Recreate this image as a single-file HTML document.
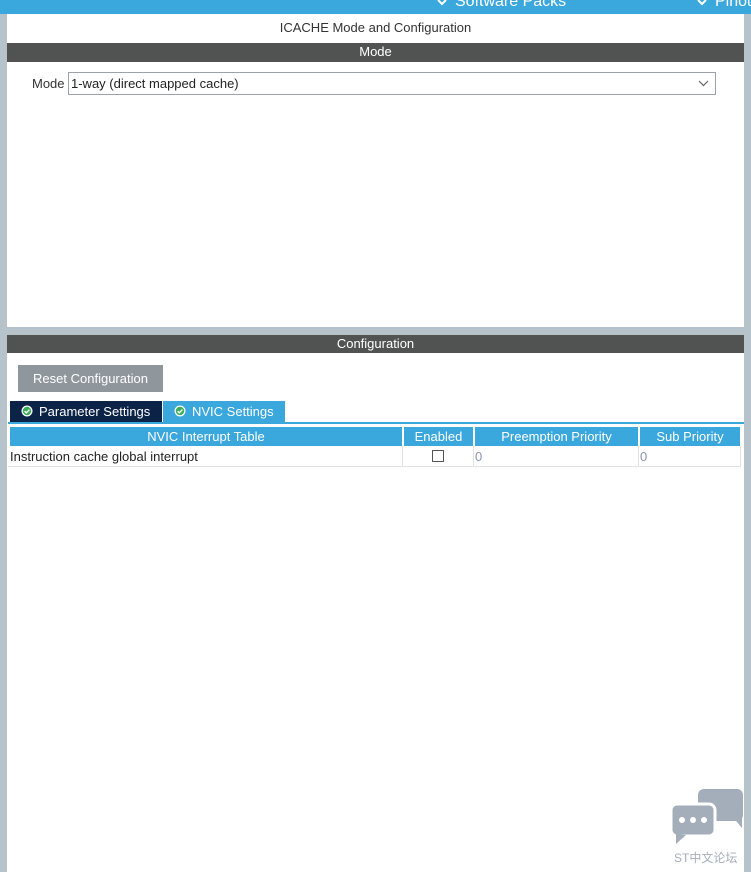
<!DOCTYPE html>
<html><head><meta charset="utf-8"><style>
*{margin:0;padding:0;box-sizing:border-box}
body{width:751px;height:872px;background:#b6c3cb;position:relative;overflow:hidden;font-family:"Liberation Sans",Arial,sans-serif;font-size:13px;color:#222}
.a{position:absolute;white-space:nowrap}
.top{left:0;top:0;width:751px;height:14px;background:#3aa8dc;color:#fff;font-size:16px;overflow:hidden}
.hdr{background:#515352;color:#fff;text-align:center;font-size:13px;line-height:18px}
.th{background:#3aa8dc;color:#fff;text-align:center;line-height:19px;font-size:13px;top:427px;height:19px}
</style></head><body>
<div class="a top"><svg class="a" style="left:437px;top:0" width="10" height="6"><path d="M1 0L5 4L9 0" stroke="#fff" stroke-width="2" fill="none"/></svg><span class="a" style="left:455px;top:-7px">Software Packs</span><svg class="a" style="left:697px;top:0" width="10" height="6"><path d="M1 0L5 4L9 0" stroke="#fff" stroke-width="2" fill="none"/></svg><span class="a" style="left:715px;top:-7px">Pinout</span></div>
<div class="a" style="left:7px;top:14px;width:737px;height:313px;background:#fff"></div>
<div class="a" style="left:7px;top:20px;width:737px;text-align:center;color:#333">ICACHE Mode and Configuration</div>
<div class="a hdr" style="left:7px;top:43px;width:737px;height:19px">Mode</div>
<div class="a" style="left:32px;top:76px;color:#333">Mode</div>
<div class="a" style="left:68px;top:72px;width:648px;height:23px;border:1px solid #9aa3a8;padding:3px 2px;color:#222">1-way (direct mapped cache)<svg class="a" style="right:6px;top:7px" width="11" height="7"><path d="M1 1L5.5 5.5L10 1" fill="none" stroke="#666" stroke-width="1.2"/></svg></div>
<div class="a" style="left:7px;top:335px;width:737px;height:537px;background:#fff"></div>
<div class="a hdr" style="left:7px;top:335px;width:737px;height:18px">Configuration</div>
<div class="a" style="left:18px;top:365px;width:145px;height:27px;background:#8f979d;color:#fff;line-height:27px;text-align:center">Reset Configuration</div>
<div class="a" style="left:10px;top:401px;width:152px;height:21px;background:#0b2347;color:#fff;line-height:21px;padding-left:29px">Parameter Settings</div>
<div class="a" style="left:163px;top:401px;width:122px;height:21px;background:#3aa8dc;color:#fff;line-height:21px;padding-left:29px">NVIC Settings</div>
<svg class="a" style="left:21px;top:405px" width="12" height="12"><circle cx="6" cy="6" r="5.5" fill="#fff"/><circle cx="6" cy="6" r="4.2" fill="#3cae5a"/><path d="M3.6 6.2L5.3 7.8L8.4 4.6" stroke="#fff" stroke-width="1.4" fill="none"/></svg>
<svg class="a" style="left:174px;top:405px" width="12" height="12"><circle cx="6" cy="6" r="5.5" fill="#fff"/><circle cx="6" cy="6" r="4.2" fill="#3cae5a"/><path d="M3.6 6.2L5.3 7.8L8.4 4.6" stroke="#fff" stroke-width="1.4" fill="none"/></svg>
<div class="a" style="left:8px;top:422px;width:736px;height:2px;background:#3aa8dc"></div>
<div class="a th" style="left:10px;width:392px">NVIC Interrupt Table</div>
<div class="a th" style="left:404px;width:69px">Enabled</div>
<div class="a th" style="left:475px;width:163px">Preemption Priority</div>
<div class="a th" style="left:640px;width:100px">Sub Priority</div>
<div class="a" style="left:8px;top:446px;width:733px;height:21px;border-bottom:1px solid #e2e2e2;border-right:1px solid #e2e2e2"></div>
<div class="a" style="left:402px;top:446px;width:1px;height:20px;background:#e2e2e2"></div>
<div class="a" style="left:473px;top:446px;width:1px;height:20px;background:#e2e2e2"></div>
<div class="a" style="left:638px;top:446px;width:1px;height:20px;background:#e2e2e2"></div>
<div class="a" style="left:10px;top:449px">Instruction cache global interrupt</div>
<div class="a" style="left:432px;top:450px;width:12px;height:12px;border:1px solid #555"></div>
<div class="a" style="left:475px;top:449px;color:#8a94b0">0</div>
<div class="a" style="left:640px;top:449px;color:#8a94b0">0</div>
<svg class="a" style="left:670px;top:786px" width="75" height="62"><rect x="28" y="3" width="45" height="32" rx="6" fill="#a4aebb"/><path d="M62 30l10 12l0-12z" fill="#a4aebb"/><rect x="1" y="18" width="44" height="32" rx="6" fill="#a4aebb" stroke="#fff" stroke-width="3"/><path d="M6 48l0 10l10-9z" fill="#a4aebb"/><circle cx="12" cy="34" r="3" fill="#fff"/><circle cx="23" cy="34" r="3" fill="#fff"/><circle cx="34" cy="34" r="3" fill="#fff"/></svg>
<div class="a" style="left:674px;top:849px;color:#a4aebb;font-size:12px;font-family:'Liberation Sans','Noto Sans CJK SC',sans-serif">ST中文论坛</div>
</body></html>
